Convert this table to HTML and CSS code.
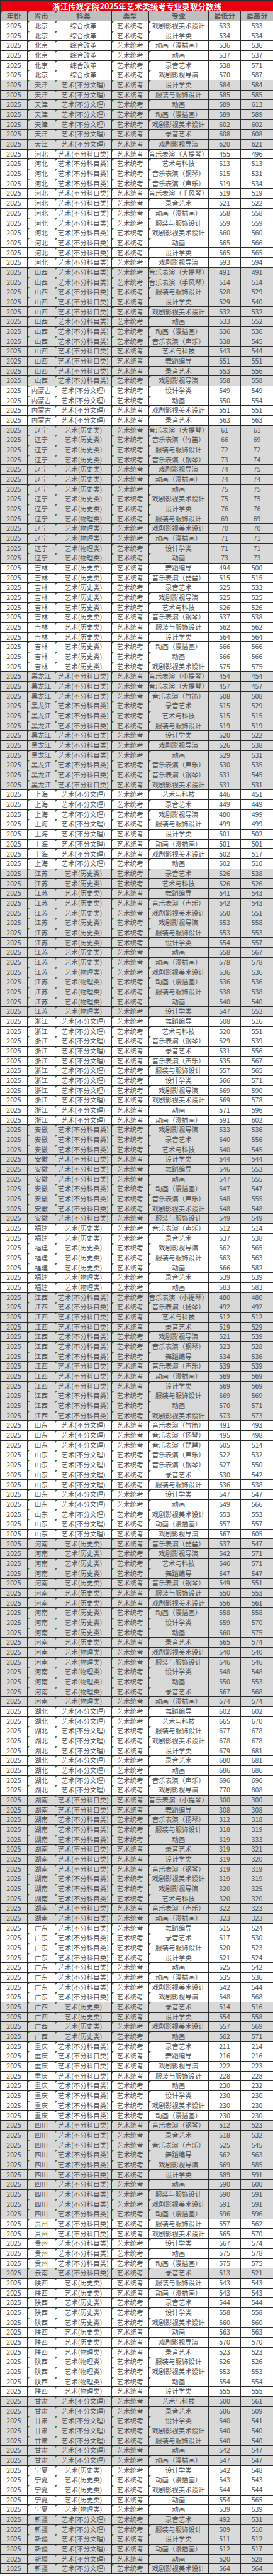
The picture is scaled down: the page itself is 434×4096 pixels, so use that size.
FILE: index.html
```html
<!DOCTYPE html>
<html lang="zh-CN">
<head>
<meta charset="utf-8">
<title>浙江传媒学院2025年艺术类统考专业录取分数线</title>
<link rel="stylesheet" href="styles.css">
</head>
<body>
<table class="sheet">
<colgroup><col class="c1"><col class="c2"><col class="c3"><col class="c4"><col class="c5"><col class="c6"><col class="c7"></colgroup>
<tr class="title"><td colspan="7">浙江传媒学院2025年艺术类统考专业录取分数线</td></tr>
<tr class="head"><td>年份<td>省市<td>科类<td>类型<td>专业<td>最低分<td>最高分</tr>
<tr><td>2025<td>北京<td>综合改革<td>艺术统考<td>戏剧影视美术设计<td>533<td>533
<tr><td>2025<td>北京<td>综合改革<td>艺术统考<td>设计学类<td>534<td>534
<tr><td>2025<td>北京<td>综合改革<td>艺术统考<td>动画（漫插画）<td>536<td>536
<tr><td>2025<td>北京<td>综合改革<td>艺术统考<td>动画<td>537<td>537
<tr><td>2025<td>北京<td>综合改革<td>艺术统考<td>录音艺术<td>538<td>571
<tr><td>2025<td>北京<td>综合改革<td>艺术统考<td>戏剧影视导演<td>570<td>587
<tr class="g"><td>2025<td>天津<td>艺术(不分文理)<td>艺术统考<td>设计学类<td>584<td>584
<tr class="g"><td>2025<td>天津<td>艺术(不分文理)<td>艺术统考<td>服装与服饰设计<td>585<td>585
<tr class="g"><td>2025<td>天津<td>艺术(不分文理)<td>艺术统考<td>动画<td>589<td>613
<tr class="g"><td>2025<td>天津<td>艺术(不分文理)<td>艺术统考<td>动画（漫插画）<td>589<td>589
<tr class="g"><td>2025<td>天津<td>艺术(不分文理)<td>艺术统考<td>戏剧影视美术设计<td>602<td>602
<tr class="g"><td>2025<td>天津<td>艺术(不分文理)<td>艺术统考<td>录音艺术<td>608<td>608
<tr class="g"><td>2025<td>天津<td>艺术(不分文理)<td>艺术统考<td>戏剧影视导演<td>620<td>621
<tr><td>2025<td>河北<td>艺术(不分科目类)<td>艺术统考<td>音乐表演（大提琴）<td>455<td>496
<tr><td>2025<td>河北<td>艺术(不分科目类)<td>艺术统考<td>艺术与科技<td>513<td>513
<tr><td>2025<td>河北<td>艺术(不分科目类)<td>艺术统考<td>音乐表演（钢琴）<td>515<td>531
<tr><td>2025<td>河北<td>艺术(不分科目类)<td>艺术统考<td>音乐表演（声乐）<td>519<td>534
<tr><td>2025<td>河北<td>艺术(不分科目类)<td>艺术统考<td>音乐表演（手风琴）<td>519<td>519
<tr><td>2025<td>河北<td>艺术(不分科目类)<td>艺术统考<td>录音艺术<td>521<td>522
<tr><td>2025<td>河北<td>艺术(不分科目类)<td>艺术统考<td>动画（漫插画）<td>558<td>558
<tr><td>2025<td>河北<td>艺术(不分科目类)<td>艺术统考<td>服装与服饰设计<td>559<td>559
<tr><td>2025<td>河北<td>艺术(不分科目类)<td>艺术统考<td>戏剧影视美术设计<td>560<td>560
<tr><td>2025<td>河北<td>艺术(不分科目类)<td>艺术统考<td>动画<td>565<td>566
<tr><td>2025<td>河北<td>艺术(不分科目类)<td>艺术统考<td>设计学类<td>565<td>565
<tr><td>2025<td>河北<td>艺术(不分科目类)<td>艺术统考<td>戏剧影视导演<td>593<td>594
<tr class="g"><td>2025<td>山西<td>艺术(不分科目类)<td>艺术统考<td>音乐表演（大提琴）<td>491<td>491
<tr class="g"><td>2025<td>山西<td>艺术(不分科目类)<td>艺术统考<td>音乐表演（手风琴）<td>514<td>514
<tr class="g"><td>2025<td>山西<td>艺术(不分科目类)<td>艺术统考<td>服装与服饰设计<td>528<td>529
<tr class="g"><td>2025<td>山西<td>艺术(不分科目类)<td>艺术统考<td>设计学类<td>529<td>540
<tr class="g"><td>2025<td>山西<td>艺术(不分科目类)<td>艺术统考<td>戏剧影视美术设计<td>532<td>532
<tr class="g"><td>2025<td>山西<td>艺术(不分科目类)<td>艺术统考<td>动画<td>533<td>552
<tr class="g"><td>2025<td>山西<td>艺术(不分科目类)<td>艺术统考<td>动画（漫插画）<td>536<td>536
<tr class="g"><td>2025<td>山西<td>艺术(不分科目类)<td>艺术统考<td>音乐表演（声乐）<td>538<td>545
<tr class="g"><td>2025<td>山西<td>艺术(不分科目类)<td>艺术统考<td>艺术与科技<td>543<td>544
<tr class="g"><td>2025<td>山西<td>艺术(不分科目类)<td>艺术统考<td>舞蹈编导<td>551<td>551
<tr class="g"><td>2025<td>山西<td>艺术(不分科目类)<td>艺术统考<td>录音艺术<td>553<td>556
<tr class="g"><td>2025<td>山西<td>艺术(不分科目类)<td>艺术统考<td>戏剧影视导演<td>558<td>558
<tr><td>2025<td>内蒙古<td>艺术(不分文理)<td>艺术统考<td>设计学类<td>549<td>549
<tr><td>2025<td>内蒙古<td>艺术(不分文理)<td>艺术统考<td>动画<td>550<td>554
<tr><td>2025<td>内蒙古<td>艺术(不分文理)<td>艺术统考<td>戏剧影视美术设计<td>551<td>551
<tr><td>2025<td>内蒙古<td>艺术(不分文理)<td>艺术统考<td>录音艺术<td>563<td>563
<tr class="g"><td>2025<td>辽宁<td>艺术(历史类)<td>艺术统考<td>音乐表演（大提琴）<td>61<td>61
<tr class="g"><td>2025<td>辽宁<td>艺术(历史类)<td>艺术统考<td>音乐表演（竹笛）<td>66<td>69
<tr class="g"><td>2025<td>辽宁<td>艺术(历史类)<td>艺术统考<td>服装与服饰设计<td>72<td>72
<tr class="g"><td>2025<td>辽宁<td>艺术(历史类)<td>艺术统考<td>音乐表演（钢琴）<td>73<td>74
<tr class="g"><td>2025<td>辽宁<td>艺术(历史类)<td>艺术统考<td>戏剧影视导演<td>74<td>75
<tr class="g"><td>2025<td>辽宁<td>艺术(历史类)<td>艺术统考<td>动画（漫插画）<td>74<td>74
<tr class="g"><td>2025<td>辽宁<td>艺术(历史类)<td>艺术统考<td>动画<td>75<td>75
<tr class="g"><td>2025<td>辽宁<td>艺术(历史类)<td>艺术统考<td>戏剧影视美术设计<td>75<td>75
<tr class="g"><td>2025<td>辽宁<td>艺术(历史类)<td>艺术统考<td>设计学类<td>76<td>76
<tr class="g"><td>2025<td>辽宁<td>艺术(物理类)<td>艺术统考<td>服装与服饰设计<td>69<td>69
<tr class="g"><td>2025<td>辽宁<td>艺术(物理类)<td>艺术统考<td>戏剧影视美术设计<td>70<td>70
<tr class="g"><td>2025<td>辽宁<td>艺术(物理类)<td>艺术统考<td>动画（漫插画）<td>71<td>71
<tr class="g"><td>2025<td>辽宁<td>艺术(物理类)<td>艺术统考<td>设计学类<td>71<td>71
<tr class="g"><td>2025<td>辽宁<td>艺术(物理类)<td>艺术统考<td>动画<td>73<td>73
<tr><td>2025<td>吉林<td>艺术(历史类)<td>艺术统考<td>舞蹈编导<td>494<td>500
<tr><td>2025<td>吉林<td>艺术(历史类)<td>艺术统考<td>音乐表演（琵琶）<td>515<td>515
<tr><td>2025<td>吉林<td>艺术(历史类)<td>艺术统考<td>录音艺术<td>525<td>533
<tr><td>2025<td>吉林<td>艺术(历史类)<td>艺术统考<td>戏剧影视导演<td>525<td>525
<tr><td>2025<td>吉林<td>艺术(历史类)<td>艺术统考<td>艺术与科技<td>526<td>526
<tr><td>2025<td>吉林<td>艺术(历史类)<td>艺术统考<td>音乐表演（钢琴）<td>537<td>538
<tr><td>2025<td>吉林<td>艺术(历史类)<td>艺术统考<td>服装与服饰设计<td>562<td>562
<tr><td>2025<td>吉林<td>艺术(历史类)<td>艺术统考<td>设计学类<td>564<td>564
<tr><td>2025<td>吉林<td>艺术(历史类)<td>艺术统考<td>动画（漫插画）<td>566<td>566
<tr><td>2025<td>吉林<td>艺术(历史类)<td>艺术统考<td>动画<td>566<td>566
<tr><td>2025<td>吉林<td>艺术(历史类)<td>艺术统考<td>戏剧影视美术设计<td>575<td>575
<tr class="g"><td>2025<td>黑龙江<td>艺术(不分科目类)<td>艺术统考<td>音乐表演（小提琴）<td>454<td>454
<tr class="g"><td>2025<td>黑龙江<td>艺术(不分科目类)<td>艺术统考<td>音乐表演（大提琴）<td>457<td>457
<tr class="g"><td>2025<td>黑龙江<td>艺术(不分科目类)<td>艺术统考<td>音乐表演（竹笛）<td>508<td>508
<tr class="g"><td>2025<td>黑龙江<td>艺术(不分科目类)<td>艺术统考<td>录音艺术<td>515<td>529
<tr class="g"><td>2025<td>黑龙江<td>艺术(不分科目类)<td>艺术统考<td>艺术与科技<td>515<td>515
<tr class="g"><td>2025<td>黑龙江<td>艺术(不分科目类)<td>艺术统考<td>服装与服饰设计<td>519<td>519
<tr class="g"><td>2025<td>黑龙江<td>艺术(不分科目类)<td>艺术统考<td>设计学类<td>520<td>522
<tr class="g"><td>2025<td>黑龙江<td>艺术(不分科目类)<td>艺术统考<td>戏剧影视导演<td>526<td>538
<tr class="g"><td>2025<td>黑龙江<td>艺术(不分科目类)<td>艺术统考<td>动画<td>529<td>531
<tr class="g"><td>2025<td>黑龙江<td>艺术(不分科目类)<td>艺术统考<td>音乐表演（声乐）<td>530<td>535
<tr class="g"><td>2025<td>黑龙江<td>艺术(不分科目类)<td>艺术统考<td>音乐表演（钢琴）<td>531<td>545
<tr class="g"><td>2025<td>黑龙江<td>艺术(不分科目类)<td>艺术统考<td>戏剧影视美术设计<td>531<td>531
<tr><td>2025<td>上海<td>艺术(不分文理)<td>艺术统考<td>艺术与科技<td>446<td>451
<tr><td>2025<td>上海<td>艺术(不分文理)<td>艺术统考<td>录音艺术<td>449<td>449
<tr><td>2025<td>上海<td>艺术(不分文理)<td>艺术统考<td>戏剧影视导演<td>480<td>499
<tr><td>2025<td>上海<td>艺术(不分文理)<td>艺术统考<td>服装与服饰设计<td>499<td>499
<tr><td>2025<td>上海<td>艺术(不分文理)<td>艺术统考<td>设计学类<td>501<td>502
<tr><td>2025<td>上海<td>艺术(不分文理)<td>艺术统考<td>动画（漫插画）<td>501<td>501
<tr><td>2025<td>上海<td>艺术(不分文理)<td>艺术统考<td>戏剧影视美术设计<td>502<td>517
<tr><td>2025<td>上海<td>艺术(不分文理)<td>艺术统考<td>动画<td>502<td>510
<tr class="g"><td>2025<td>江苏<td>艺术(历史类)<td>艺术统考<td>录音艺术<td>526<td>538
<tr class="g"><td>2025<td>江苏<td>艺术(历史类)<td>艺术统考<td>艺术与科技<td>526<td>526
<tr class="g"><td>2025<td>江苏<td>艺术(历史类)<td>艺术统考<td>舞蹈编导<td>541<td>543
<tr class="g"><td>2025<td>江苏<td>艺术(历史类)<td>艺术统考<td>音乐表演（声乐）<td>542<td>543
<tr class="g"><td>2025<td>江苏<td>艺术(历史类)<td>艺术统考<td>戏剧影视美术设计<td>550<td>551
<tr class="g"><td>2025<td>江苏<td>艺术(历史类)<td>艺术统考<td>戏剧影视导演<td>553<td>558
<tr class="g"><td>2025<td>江苏<td>艺术(历史类)<td>艺术统考<td>服装与服饰设计<td>553<td>553
<tr class="g"><td>2025<td>江苏<td>艺术(历史类)<td>艺术统考<td>设计学类<td>554<td>557
<tr class="g"><td>2025<td>江苏<td>艺术(历史类)<td>艺术统考<td>动画<td>558<td>567
<tr class="g"><td>2025<td>江苏<td>艺术(历史类)<td>艺术统考<td>动画（漫插画）<td>578<td>578
<tr class="g"><td>2025<td>江苏<td>艺术(物理类)<td>艺术统考<td>戏剧影视美术设计<td>536<td>536
<tr class="g"><td>2025<td>江苏<td>艺术(物理类)<td>艺术统考<td>动画（漫插画）<td>536<td>536
<tr class="g"><td>2025<td>江苏<td>艺术(物理类)<td>艺术统考<td>服装与服饰设计<td>538<td>538
<tr class="g"><td>2025<td>江苏<td>艺术(物理类)<td>艺术统考<td>动画<td>540<td>540
<tr class="g"><td>2025<td>江苏<td>艺术(物理类)<td>艺术统考<td>设计学类<td>547<td>553
<tr><td>2025<td>浙江<td>艺术(不分文理)<td>艺术统考<td>舞蹈编导<td>508<td>516
<tr><td>2025<td>浙江<td>艺术(不分文理)<td>艺术统考<td>艺术与科技<td>520<td>551
<tr><td>2025<td>浙江<td>艺术(不分文理)<td>艺术统考<td>音乐表演（钢琴）<td>529<td>539
<tr><td>2025<td>浙江<td>艺术(不分文理)<td>艺术统考<td>录音艺术<td>531<td>556
<tr><td>2025<td>浙江<td>艺术(不分文理)<td>艺术统考<td>音乐表演（声乐）<td>535<td>567
<tr><td>2025<td>浙江<td>艺术(不分文理)<td>艺术统考<td>服装与服饰设计<td>557<td>565
<tr><td>2025<td>浙江<td>艺术(不分文理)<td>艺术统考<td>设计学类<td>566<td>571
<tr><td>2025<td>浙江<td>艺术(不分文理)<td>艺术统考<td>戏剧影视导演<td>569<td>590
<tr><td>2025<td>浙江<td>艺术(不分文理)<td>艺术统考<td>戏剧影视美术设计<td>569<td>578
<tr><td>2025<td>浙江<td>艺术(不分文理)<td>艺术统考<td>动画<td>571<td>596
<tr><td>2025<td>浙江<td>艺术(不分文理)<td>艺术统考<td>动画（漫插画）<td>591<td>602
<tr class="g"><td>2025<td>安徽<td>艺术(不分科目类)<td>艺术统考<td>戏剧影视导演<td>533<td>536
<tr class="g"><td>2025<td>安徽<td>艺术(不分科目类)<td>艺术统考<td>录音艺术<td>540<td>556
<tr class="g"><td>2025<td>安徽<td>艺术(不分科目类)<td>艺术统考<td>艺术与科技<td>540<td>545
<tr class="g"><td>2025<td>安徽<td>艺术(不分科目类)<td>艺术统考<td>设计学类<td>544<td>544
<tr class="g"><td>2025<td>安徽<td>艺术(不分科目类)<td>艺术统考<td>舞蹈编导<td>546<td>553
<tr class="g"><td>2025<td>安徽<td>艺术(不分科目类)<td>艺术统考<td>动画<td>547<td>555
<tr class="g"><td>2025<td>安徽<td>艺术(不分科目类)<td>艺术统考<td>动画（漫插画）<td>547<td>547
<tr class="g"><td>2025<td>安徽<td>艺术(不分科目类)<td>艺术统考<td>音乐表演（声乐）<td>548<td>555
<tr class="g"><td>2025<td>安徽<td>艺术(不分科目类)<td>艺术统考<td>戏剧影视美术设计<td>548<td>548
<tr class="g"><td>2025<td>安徽<td>艺术(不分科目类)<td>艺术统考<td>服装与服饰设计<td>549<td>549
<tr><td>2025<td>福建<td>艺术(历史类)<td>艺术统考<td>音乐表演（声乐）<td>512<td>514
<tr><td>2025<td>福建<td>艺术(历史类)<td>艺术统考<td>录音艺术<td>537<td>538
<tr><td>2025<td>福建<td>艺术(历史类)<td>艺术统考<td>戏剧影视导演<td>562<td>565
<tr><td>2025<td>福建<td>艺术(历史类)<td>艺术统考<td>服装与服饰设计<td>563<td>563
<tr><td>2025<td>福建<td>艺术(历史类)<td>艺术统考<td>动画<td>566<td>582
<tr><td>2025<td>福建<td>艺术(物理类)<td>艺术统考<td>录音艺术<td>539<td>539
<tr><td>2025<td>福建<td>艺术(物理类)<td>艺术统考<td>动画<td>583<td>583
<tr class="g"><td>2025<td>江西<td>艺术(不分科目类)<td>艺术统考<td>音乐表演（小提琴）<td>480<td>480
<tr class="g"><td>2025<td>江西<td>艺术(不分科目类)<td>艺术统考<td>音乐表演（扬琴）<td>492<td>492
<tr class="g"><td>2025<td>江西<td>艺术(不分科目类)<td>艺术统考<td>艺术与科技<td>512<td>512
<tr class="g"><td>2025<td>江西<td>艺术(不分科目类)<td>艺术统考<td>录音艺术<td>519<td>529
<tr class="g"><td>2025<td>江西<td>艺术(不分科目类)<td>艺术统考<td>戏剧影视导演<td>521<td>539
<tr class="g"><td>2025<td>江西<td>艺术(不分科目类)<td>艺术统考<td>音乐表演（钢琴）<td>523<td>528
<tr class="g"><td>2025<td>江西<td>艺术(不分科目类)<td>艺术统考<td>舞蹈编导<td>534<td>536
<tr class="g"><td>2025<td>江西<td>艺术(不分科目类)<td>艺术统考<td>音乐表演（声乐）<td>539<td>539
<tr class="g"><td>2025<td>江西<td>艺术(不分科目类)<td>艺术统考<td>动画（漫插画）<td>569<td>569
<tr class="g"><td>2025<td>江西<td>艺术(不分科目类)<td>艺术统考<td>设计学类<td>569<td>569
<tr class="g"><td>2025<td>江西<td>艺术(不分科目类)<td>艺术统考<td>服装与服饰设计<td>569<td>569
<tr class="g"><td>2025<td>江西<td>艺术(不分科目类)<td>艺术统考<td>动画<td>570<td>571
<tr class="g"><td>2025<td>江西<td>艺术(不分科目类)<td>艺术统考<td>戏剧影视美术设计<td>573<td>573
<tr><td>2025<td>山东<td>艺术(不分文理)<td>艺术统考<td>音乐表演（竹笛）<td>491<td>493
<tr><td>2025<td>山东<td>艺术(不分文理)<td>艺术统考<td>音乐表演（扬琴）<td>495<td>498
<tr><td>2025<td>山东<td>艺术(不分文理)<td>艺术统考<td>音乐表演（琵琶）<td>505<td>514
<tr><td>2025<td>山东<td>艺术(不分文理)<td>艺术统考<td>音乐表演（声乐）<td>522<td>532
<tr><td>2025<td>山东<td>艺术(不分文理)<td>艺术统考<td>音乐表演（钢琴）<td>527<td>550
<tr><td>2025<td>山东<td>艺术(不分文理)<td>艺术统考<td>录音艺术<td>530<td>542
<tr><td>2025<td>山东<td>艺术(不分文理)<td>艺术统考<td>服装与服饰设计<td>536<td>538
<tr><td>2025<td>山东<td>艺术(不分文理)<td>艺术统考<td>设计学类<td>547<td>547
<tr><td>2025<td>山东<td>艺术(不分文理)<td>艺术统考<td>动画<td>549<td>566
<tr><td>2025<td>山东<td>艺术(不分文理)<td>艺术统考<td>戏剧影视美术设计<td>553<td>553
<tr><td>2025<td>山东<td>艺术(不分文理)<td>艺术统考<td>动画（漫插画）<td>557<td>557
<tr><td>2025<td>山东<td>艺术(不分文理)<td>艺术统考<td>戏剧影视导演<td>567<td>605
<tr class="g"><td>2025<td>河南<td>艺术(历史类)<td>艺术统考<td>音乐表演（琵琶）<td>537<td>547
<tr class="g"><td>2025<td>河南<td>艺术(历史类)<td>艺术统考<td>戏剧影视导演<td>542<td>571
<tr class="g"><td>2025<td>河南<td>艺术(历史类)<td>艺术统考<td>艺术与科技<td>546<td>571
<tr class="g"><td>2025<td>河南<td>艺术(历史类)<td>艺术统考<td>舞蹈编导<td>547<td>547
<tr class="g"><td>2025<td>河南<td>艺术(历史类)<td>艺术统考<td>音乐表演（钢琴）<td>549<td>551
<tr class="g"><td>2025<td>河南<td>艺术(历史类)<td>艺术统考<td>服装与服饰设计<td>550<td>553
<tr class="g"><td>2025<td>河南<td>艺术(历史类)<td>艺术统考<td>戏剧影视美术设计<td>556<td>561
<tr class="g"><td>2025<td>河南<td>艺术(历史类)<td>艺术统考<td>动画（漫插画）<td>558<td>558
<tr class="g"><td>2025<td>河南<td>艺术(历史类)<td>艺术统考<td>设计学类<td>559<td>570
<tr class="g"><td>2025<td>河南<td>艺术(历史类)<td>艺术统考<td>动画<td>560<td>575
<tr class="g"><td>2025<td>河南<td>艺术(历史类)<td>艺术统考<td>录音艺术<td>565<td>574
<tr class="g"><td>2025<td>河南<td>艺术(物理类)<td>艺术统考<td>戏剧影视美术设计<td>540<td>540
<tr class="g"><td>2025<td>河南<td>艺术(物理类)<td>艺术统考<td>服装与服饰设计<td>546<td>546
<tr class="g"><td>2025<td>河南<td>艺术(物理类)<td>艺术统考<td>设计学类<td>548<td>548
<tr class="g"><td>2025<td>河南<td>艺术(物理类)<td>艺术统考<td>动画<td>550<td>553
<tr class="g"><td>2025<td>河南<td>艺术(物理类)<td>艺术统考<td>录音艺术<td>567<td>568
<tr class="g"><td>2025<td>河南<td>艺术(物理类)<td>艺术统考<td>动画（漫插画）<td>574<td>574
<tr><td>2025<td>湖北<td>艺术(不分文理)<td>艺术统考<td>舞蹈编导<td>602<td>602
<tr><td>2025<td>湖北<td>艺术(不分文理)<td>艺术统考<td>艺术与科技<td>665<td>670
<tr><td>2025<td>湖北<td>艺术(不分文理)<td>艺术统考<td>服装与服饰设计<td>677<td>678
<tr><td>2025<td>湖北<td>艺术(不分文理)<td>艺术统考<td>戏剧影视美术设计<td>678<td>678
<tr><td>2025<td>湖北<td>艺术(不分文理)<td>艺术统考<td>设计学类<td>679<td>681
<tr><td>2025<td>湖北<td>艺术(不分文理)<td>艺术统考<td>录音艺术<td>680<td>681
<tr><td>2025<td>湖北<td>艺术(不分文理)<td>艺术统考<td>动画<td>686<td>686
<tr><td>2025<td>湖北<td>艺术(不分文理)<td>艺术统考<td>音乐表演（声乐）<td>696<td>696
<tr><td>2025<td>湖北<td>艺术(不分文理)<td>艺术统考<td>戏剧影视导演<td>770<td>808
<tr class="g"><td>2025<td>湖南<td>艺术(不分科目类)<td>艺术统考<td>音乐表演（小提琴）<td>300<td>300
<tr class="g"><td>2025<td>湖南<td>艺术(不分科目类)<td>艺术统考<td>舞蹈编导<td>308<td>308
<tr class="g"><td>2025<td>湖南<td>艺术(不分科目类)<td>艺术统考<td>音乐表演（扬琴）<td>312<td>318
<tr class="g"><td>2025<td>湖南<td>艺术(不分科目类)<td>艺术统考<td>服装与服饰设计<td>318<td>319
<tr class="g"><td>2025<td>湖南<td>艺术(不分科目类)<td>艺术统考<td>动画<td>319<td>333
<tr class="g"><td>2025<td>湖南<td>艺术(不分科目类)<td>艺术统考<td>录音艺术<td>319<td>321
<tr class="g"><td>2025<td>湖南<td>艺术(不分科目类)<td>艺术统考<td>设计学类<td>319<td>320
<tr class="g"><td>2025<td>湖南<td>艺术(不分科目类)<td>艺术统考<td>音乐表演（钢琴）<td>319<td>319
<tr class="g"><td>2025<td>湖南<td>艺术(不分科目类)<td>艺术统考<td>戏剧影视美术设计<td>319<td>319
<tr class="g"><td>2025<td>湖南<td>艺术(不分科目类)<td>艺术统考<td>戏剧影视导演<td>320<td>325
<tr class="g"><td>2025<td>湖南<td>艺术(不分科目类)<td>艺术统考<td>艺术与科技<td>320<td>320
<tr class="g"><td>2025<td>湖南<td>艺术(不分科目类)<td>艺术统考<td>音乐表演（声乐）<td>322<td>323
<tr class="g"><td>2025<td>湖南<td>艺术(不分科目类)<td>艺术统考<td>动画（漫插画）<td>323<td>323
<tr><td>2025<td>广东<td>艺术(不分科目类)<td>艺术统考<td>舞蹈编导<td>515<td>524
<tr><td>2025<td>广东<td>艺术(不分科目类)<td>艺术统考<td>录音艺术<td>517<td>530
<tr><td>2025<td>广东<td>艺术(不分科目类)<td>艺术统考<td>服装与服饰设计<td>520<td>523
<tr><td>2025<td>广东<td>艺术(不分科目类)<td>艺术统考<td>设计学类<td>521<td>524
<tr><td>2025<td>广东<td>艺术(不分科目类)<td>艺术统考<td>动画<td>525<td>542
<tr><td>2025<td>广东<td>艺术(不分科目类)<td>艺术统考<td>动画（漫插画）<td>535<td>536
<tr><td>2025<td>广东<td>艺术(不分科目类)<td>艺术统考<td>戏剧影视美术设计<td>542<td>544
<tr><td>2025<td>广东<td>艺术(不分科目类)<td>艺术统考<td>戏剧影视导演<td>548<td>568
<tr class="g"><td>2025<td>广西<td>艺术(历史类)<td>艺术统考<td>录音艺术<td>514<td>516
<tr class="g"><td>2025<td>广西<td>艺术(历史类)<td>艺术统考<td>设计学类<td>554<td>558
<tr class="g"><td>2025<td>广西<td>艺术(历史类)<td>艺术统考<td>戏剧影视美术设计<td>557<td>569
<tr class="g"><td>2025<td>广西<td>艺术(历史类)<td>艺术统考<td>动画<td>562<td>571
<tr><td>2025<td>重庆<td>艺术(不分科目类)<td>艺术统考<td>录音艺术<td>211<td>214
<tr><td>2025<td>重庆<td>艺术(不分科目类)<td>艺术统考<td>舞蹈编导<td>216<td>216
<tr><td>2025<td>重庆<td>艺术(不分科目类)<td>艺术统考<td>戏剧影视导演<td>222<td>223
<tr><td>2025<td>重庆<td>艺术(不分科目类)<td>艺术统考<td>服装与服饰设计<td>228<td>228
<tr><td>2025<td>重庆<td>艺术(不分科目类)<td>艺术统考<td>动画<td>230<td>232
<tr><td>2025<td>重庆<td>艺术(不分科目类)<td>艺术统考<td>设计学类<td>230<td>230
<tr><td>2025<td>重庆<td>艺术(不分科目类)<td>艺术统考<td>戏剧影视美术设计<td>230<td>230
<tr><td>2025<td>重庆<td>艺术(不分科目类)<td>艺术统考<td>动画（漫插画）<td>230<td>230
<tr class="g"><td>2025<td>四川<td>艺术(不分科目类)<td>艺术统考<td>音乐表演（钢琴）<td>512<td>523
<tr class="g"><td>2025<td>四川<td>艺术(不分科目类)<td>艺术统考<td>录音艺术<td>518<td>532
<tr class="g"><td>2025<td>四川<td>艺术(不分科目类)<td>艺术统考<td>音乐表演（声乐）<td>525<td>545
<tr class="g"><td>2025<td>四川<td>艺术(不分科目类)<td>艺术统考<td>舞蹈编导<td>562<td>563
<tr class="g"><td>2025<td>四川<td>艺术(不分科目类)<td>艺术统考<td>戏剧影视导演<td>569<td>585
<tr class="g"><td>2025<td>四川<td>艺术(不分科目类)<td>艺术统考<td>设计学类<td>589<td>591
<tr class="g"><td>2025<td>四川<td>艺术(不分科目类)<td>艺术统考<td>动画<td>590<td>600
<tr class="g"><td>2025<td>四川<td>艺术(不分科目类)<td>艺术统考<td>服装与服饰设计<td>590<td>591
<tr class="g"><td>2025<td>四川<td>艺术(不分科目类)<td>艺术统考<td>戏剧影视美术设计<td>591<td>591
<tr class="g"><td>2025<td>四川<td>艺术(不分科目类)<td>艺术统考<td>动画（漫插画）<td>596<td>596
<tr><td>2025<td>贵州<td>艺术(不分科目类)<td>艺术统考<td>服装与服饰设计<td>557<td>562
<tr><td>2025<td>贵州<td>艺术(不分科目类)<td>艺术统考<td>戏剧影视美术设计<td>565<td>570
<tr><td>2025<td>贵州<td>艺术(不分科目类)<td>艺术统考<td>设计学类<td>567<td>574
<tr><td>2025<td>贵州<td>艺术(不分科目类)<td>艺术统考<td>动画<td>575<td>578
<tr><td>2025<td>贵州<td>艺术(不分科目类)<td>艺术统考<td>动画（漫插画）<td>575<td>575
<tr class="g"><td>2025<td>云南<td>艺术(不分科目类)<td>艺术统考<td>录音艺术<td>513<td>521
<tr><td>2025<td>陕西<td>艺术(历史类)<td>艺术统考<td>服装与服饰设计<td>543<td>543
<tr><td>2025<td>陕西<td>艺术(历史类)<td>艺术统考<td>动画（漫插画）<td>543<td>543
<tr><td>2025<td>陕西<td>艺术(历史类)<td>艺术统考<td>录音艺术<td>544<td>544
<tr><td>2025<td>陕西<td>艺术(历史类)<td>艺术统考<td>设计学类<td>558<td>558
<tr><td>2025<td>陕西<td>艺术(历史类)<td>艺术统考<td>戏剧影视美术设计<td>560<td>560
<tr><td>2025<td>陕西<td>艺术(历史类)<td>艺术统考<td>动画<td>563<td>563
<tr><td>2025<td>陕西<td>艺术(历史类)<td>艺术统考<td>戏剧影视导演<td>570<td>570
<tr><td>2025<td>陕西<td>艺术(物理类)<td>艺术统考<td>录音艺术<td>523<td>523
<tr><td>2025<td>陕西<td>艺术(物理类)<td>艺术统考<td>服装与服饰设计<td>526<td>526
<tr><td>2025<td>陕西<td>艺术(物理类)<td>艺术统考<td>戏剧影视美术设计<td>553<td>553
<tr><td>2025<td>陕西<td>艺术(物理类)<td>艺术统考<td>动画<td>554<td>554
<tr><td>2025<td>陕西<td>艺术(物理类)<td>艺术统考<td>设计学类<td>555<td>555
<tr class="g"><td>2025<td>甘肃<td>艺术(不分文理)<td>艺术统考<td>艺术与科技<td>500<td>561
<tr class="g"><td>2025<td>甘肃<td>艺术(不分文理)<td>艺术统考<td>录音艺术<td>506<td>509
<tr class="g"><td>2025<td>甘肃<td>艺术(不分文理)<td>艺术统考<td>设计学类<td>540<td>541
<tr class="g"><td>2025<td>甘肃<td>艺术(不分文理)<td>艺术统考<td>戏剧影视美术设计<td>540<td>540
<tr class="g"><td>2025<td>甘肃<td>艺术(不分文理)<td>艺术统考<td>服装与服饰设计<td>540<td>540
<tr class="g"><td>2025<td>甘肃<td>艺术(不分文理)<td>艺术统考<td>动画<td>542<td>547
<tr class="g"><td>2025<td>甘肃<td>艺术(不分文理)<td>艺术统考<td>动画（漫插画）<td>547<td>547
<tr><td>2025<td>宁夏<td>艺术(历史类)<td>艺术统考<td>设计学类<td>542<td>548
<tr><td>2025<td>宁夏<td>艺术(历史类)<td>艺术统考<td>动画（漫插画）<td>543<td>543
<tr><td>2025<td>宁夏<td>艺术(历史类)<td>艺术统考<td>戏剧影视美术设计<td>544<td>544
<tr><td>2025<td>宁夏<td>艺术(历史类)<td>艺术统考<td>动画<td>554<td>565
<tr><td>2025<td>宁夏<td>艺术(物理类)<td>艺术统考<td>动画<td>539<td>539
<tr class="g"><td>2025<td>新疆<td>艺术(不分文理)<td>艺术统考<td>录音艺术<td>492<td>531
<tr class="g"><td>2025<td>新疆<td>艺术(不分文理)<td>艺术统考<td>服装与服饰设计<td>509<td>510
<tr class="g"><td>2025<td>新疆<td>艺术(不分文理)<td>艺术统考<td>设计学类<td>511<td>512
<tr class="g"><td>2025<td>新疆<td>艺术(不分文理)<td>艺术统考<td>动画（漫插画）<td>512<td>517
<tr class="g"><td>2025<td>新疆<td>艺术(不分文理)<td>艺术统考<td>动画<td>520<td>528
<tr class="g"><td>2025<td>新疆<td>艺术(不分文理)<td>艺术统考<td>戏剧影视美术设计<td>564<td>564
</table>
</body>
</html>
```
FILE: styles.css
```css
html, body {
  margin: 0;
  padding: 0;
  background: #ffffff;
}

.sheet {
  width: 434px;
  table-layout: fixed;
  border-collapse: collapse;
  font-family: "Noto Sans CJK SC", "Noto Sans", sans-serif;
  color: #505050;
}

.c1 { width: 43px; }
.c2 { width: 44px; }
.c3 { width: 90px; }
.c4 { width: 58.5px; }
.c5 { width: 95.5px; }
.c6 { width: 51px; }
.c7 { width: 52px; }

.sheet td {
  position: relative;
  padding: 0;
  border: 1px solid #2b2b2b;
  text-align: center;
  vertical-align: middle;
  white-space: nowrap;
  overflow: hidden;
  font-size: 10.5px;
  line-height: 1;
}

.sheet tr {
  height: 15.687px;
}

.sheet tr.g td {
  background: #d9d9d9;
}

.sheet tr.title {
  height: 17.4px;
}

.sheet tr.title td {
  background: #e8000e;
  color: #ffffff;
  font-weight: bold;
  font-size: 12.6px;
  line-height: 15px;
  overflow: visible;
}

.sheet tr.head {
  height: 15.6px;
}

.sheet tr.head td {
  background: #bfbfbf;
  color: #5a5a5a;
  font-weight: bold;
  font-size: 11.2px;
}

.sheet tr td:nth-child(n+2):nth-child(-n+5)::before,
.sheet tr.head td:nth-child(-n+3)::before {
  content: "";
  position: absolute;
  top: 0;
  left: 0;
  width: 0;
  height: 0;
  border-top: 3.5px solid #2e7d32;
  border-right: 3.5px solid transparent;
}

.sheet tr.head td:nth-child(n+4)::before {
  display: none;
}

.sheet tr.title td::before {
  display: none;
}
```
